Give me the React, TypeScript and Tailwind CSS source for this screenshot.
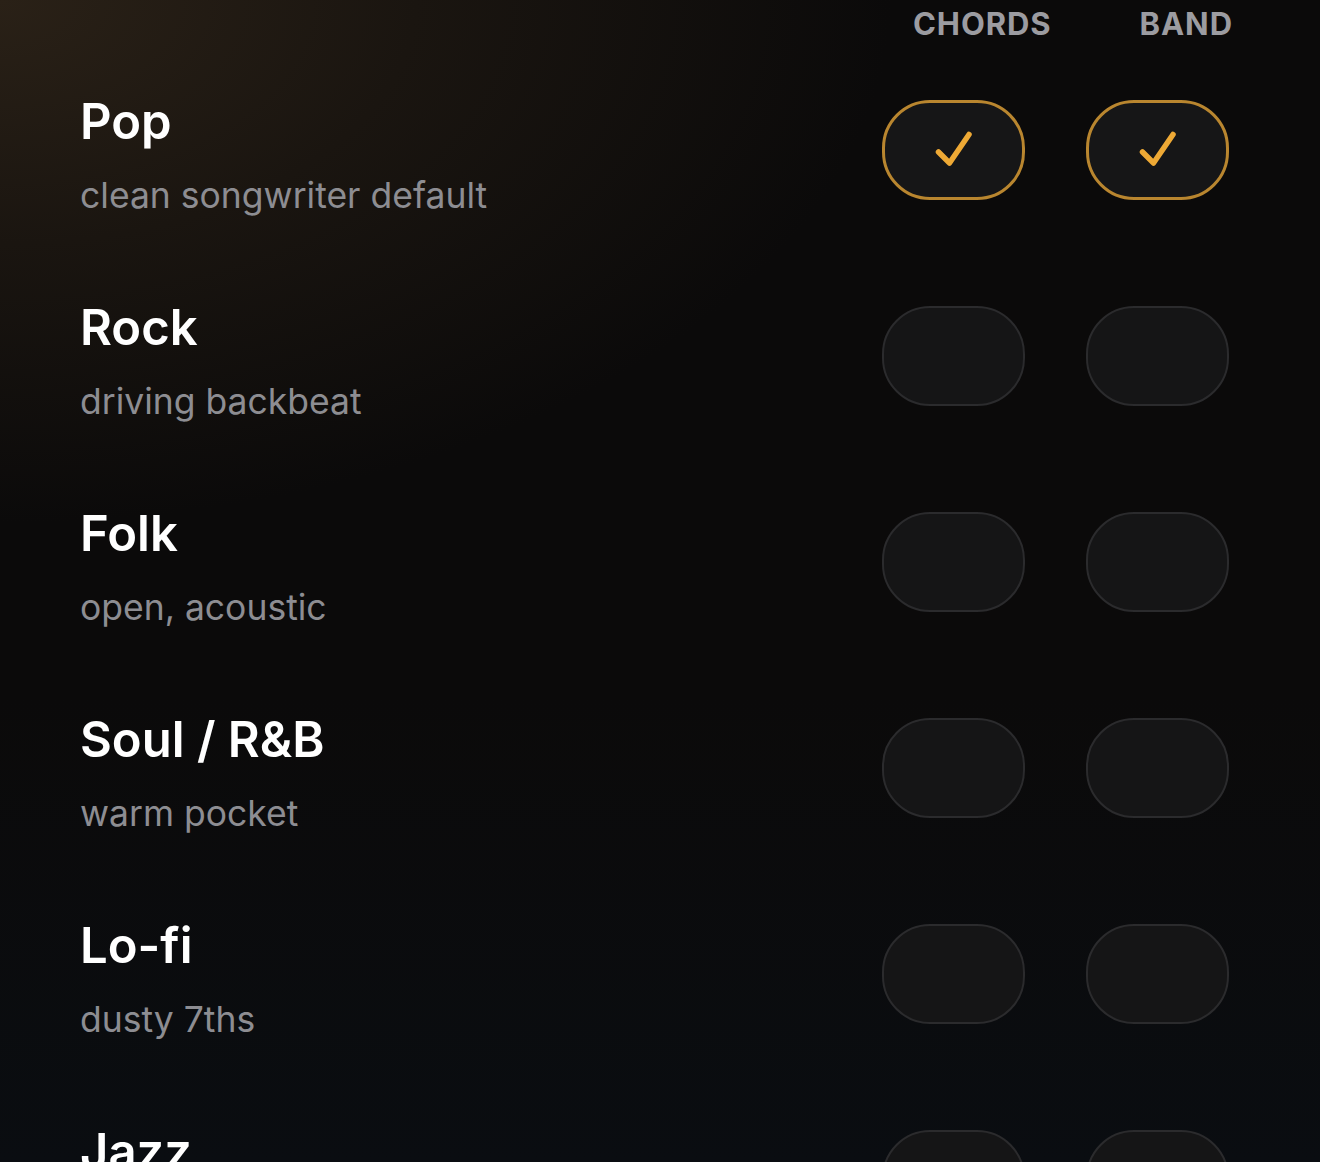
import React from 'react';

type Style = { name: string; desc: string; chords: boolean; band: boolean };

const styles: Style[] = [
  { name: 'Pop', desc: 'clean songwriter default', chords: true, band: true },
  { name: 'Rock', desc: 'driving backbeat', chords: false, band: false },
  { name: 'Folk', desc: 'open, acoustic', chords: false, band: false },
  { name: 'Soul / R&B', desc: 'warm pocket', chords: false, band: false },
  { name: 'Lo-fi', desc: 'dusty 7ths', chords: false, band: false },
  { name: 'Jazz', desc: 'extended voicings', chords: false, band: false },
];

function Toggle({ on }: { on: boolean }) {
  return (
    <button
      className={
        on
          ? 'w-[143px] h-[100px] rounded-[48px] bg-[#161617] border-[3px] border-[#b9862f] flex items-center justify-center'
          : 'w-[143px] h-[100px] rounded-[48px] bg-[#151516] border-2 border-[#2b2b2d] flex items-center justify-center'
      }
    >
      {on && (
        <svg width="40" height="40" viewBox="0 0 40 40" fill="none">
          <path
            d="M4.5 22 L15.5 33 L35 4.5"
            stroke="#eea935"
            strokeWidth="5.5"
            strokeLinecap="round"
            strokeLinejoin="round"
          />
        </svg>
      )}
    </button>
  );
}

export default function App() {
  return (
    <div
      className="relative h-[1162px] overflow-hidden bg-[#0a0a0b] text-white"
      style={{ fontFamily: 'Inter, "Noto Sans", sans-serif' }}
    >
      {/* background glow */}
      <div className="absolute inset-0 bg-[radial-gradient(ellipse_90%_60%_at_0%_0%,#2a2117_0%,#1a1510_35%,#0b0a0a_75%)]" />
      <div className="absolute inset-0 bg-[linear-gradient(to_bottom,transparent_60%,#0a0d11_100%)]" />

      <div className="relative">
        {/* column headers */}
        <div className="h-[47px] flex justify-end gap-[88px] pr-[87px] pt-[8px]">
          <span className="text-[31px] leading-[32px] font-bold tracking-[0.03em] text-[#9c9ca1]">CHORDS</span>
          <span className="text-[31px] leading-[32px] font-bold tracking-[0.03em] text-[#9c9ca1]">BAND</span>
        </div>

        {styles.map((s) => (
          <div key={s.name} className="h-[206px] flex justify-between pl-[80px] pr-[91px]">
            <div className="pt-[46px]">
              <div className="text-[49px] leading-[58px] font-semibold text-white">{s.name}</div>
              <div className="mt-[23px] text-[35.5px] leading-[44px] text-[#8d8d92]">{s.desc}</div>
            </div>
            <div className="self-center flex gap-[61px]">
              <Toggle on={s.chords} />
              <Toggle on={s.band} />
            </div>
          </div>
        ))}
      </div>
    </div>
  );
}
